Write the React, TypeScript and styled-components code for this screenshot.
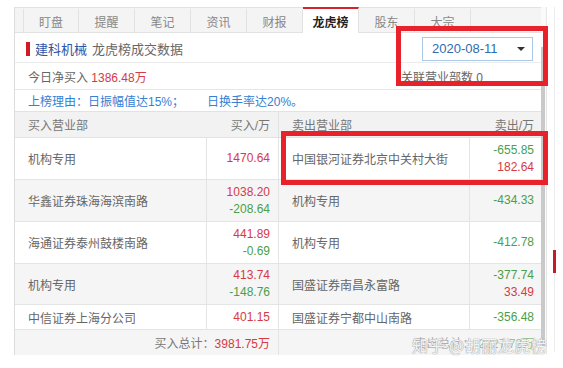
import React from "react";
import styled, { createGlobalStyle } from "styled-components";

const GlobalStyle = createGlobalStyle`
    html, body {
        margin: 0;
        padding: 0;
        background: #fff;
    }
    body {
        font-family: "Liberation Sans", "Noto Sans CJK SC", sans-serif;
        font-size: 12px;
        color: #666;
    }
    * {
        box-sizing: border-box;
    }
`;

type Line = { v: string; up?: boolean };
type Deal = { name: string; lines: Line[] };

const TABS = ["盯盘", "提醒", "笔记", "资讯", "财报", "龙虎榜", "股东", "大宗"];

const BUY: Deal[] = [
    { name: "机构专用", lines: [{ v: "1470.64", up: true }] },
    { name: "华鑫证券珠海海滨南路", lines: [{ v: "1038.20", up: true }, { v: "-208.64" }] },
    { name: "海通证券泰州鼓楼南路", lines: [{ v: "441.89", up: true }, { v: "-0.69" }] },
    { name: "机构专用", lines: [{ v: "413.74", up: true }, { v: "-148.76" }] },
    { name: "中信证券上海分公司", lines: [{ v: "401.15", up: true }] },
];

const SELL: Deal[] = [
    { name: "中国银河证券北京中关村大街", lines: [{ v: "-655.85" }, { v: "182.64", up: true }] },
    { name: "机构专用", lines: [{ v: "-434.33" }] },
    { name: "机构专用", lines: [{ v: "-412.78" }] },
    { name: "国盛证券南昌永富路", lines: [{ v: "-377.74" }, { v: "33.49", up: true }] },
    { name: "国盛证券宁都中山南路", lines: [{ v: "-356.48" }] },
];

// 行高 (参考图测量)
const ROW_HEIGHTS = [42, 42, 42, 41, 25];

export default function App() {
    return (
        <>
            <GlobalStyle />
            <Page>
                <Panel>
                    <TabBar>
                        {TABS.map((t) => (
                            <Tab key={t} $active={t === "龙虎榜"}>{t}</Tab>
                        ))}
                    </TabBar>

                    <TitleRow>
                        <RedMark />
                        <StockName>建科机械</StockName>
                        <span>龙虎榜成交数据</span>
                        <DateSelect>
                            2020-08-11
                            <Caret />
                        </DateSelect>
                    </TitleRow>

                    <InfoRow>
                        <span>
                            今日净买入 <Num $up>1386.48万</Num>
                        </span>
                        <Related>关联营业部数 0</Related>
                    </InfoRow>

                    <ReasonRow>
                        <span>上榜理由：日振幅值达15%；</span>
                        <span>日换手率达20%。</span>
                    </ReasonRow>

                    <Table>
                        <HeadCell>买入营业部</HeadCell>
                        <HeadCell $right>买入/万</HeadCell>
                        <HeadCell $split>卖出营业部</HeadCell>
                        <HeadCell $right>卖出/万</HeadCell>

                        {BUY.map((b, i) => {
                            const s = SELL[i];
                            const shade = i % 2 === 1;
                            const h = ROW_HEIGHTS[i];
                            return (
                                <React.Fragment key={i}>
                                    <NameCell $shade={shade} style={{ height: h }}>{b.name}</NameCell>
                                    <AmountCell $shade={shade}>
                                        {b.lines.map((l, j) => (
                                            <Num key={j} $up={l.up}>{l.v}</Num>
                                        ))}
                                    </AmountCell>
                                    <NameCell $shade={shade} $split>{s.name}</NameCell>
                                    <AmountCell $shade={shade}>
                                        {s.lines.map((l, j) => (
                                            <Num key={j} $up={l.up}>{l.v}</Num>
                                        ))}
                                    </AmountCell>
                                </React.Fragment>
                            );
                        })}

                        <TotalCell>
                            买入总计：<Num $up>3981.75万</Num>
                        </TotalCell>
                        <TotalCell $split>
                            <Faded>卖出总计：<Num>-2227.72万</Num></Faded>
                        </TotalCell>
                    </Table>
                </Panel>

                <ScrollTrack>
                    <ScrollThumb />
                </ScrollTrack>

                <SideRail>
                    <RailMark />
                </SideRail>

                <Callout style={{ left: 396, top: 26, width: 152, height: 60 }} />
                <Callout style={{ left: 281, top: 131, width: 267, height: 54 }} />
                <Watermark>知乎 @胡丽龙虎榜</Watermark>
            </Page>
        </>
    );
}

const Page = styled.div`
    position: relative;
    display: flex;
    align-items: flex-start;
    width: 563px;
    height: 368px;
    padding: 7px 0 0 14px;
    overflow: hidden;
`;

const Panel = styled.div`
    width: 527px;
    border-left: 1px solid #dcdcdc;
`;

const TabBar = styled.div`
    display: flex;
    height: 26px;
    padding-left: 8px;
    background: #f4f4f4;
    border-top: 1px solid #e2e2e2;
    border-bottom: 1px solid #e2e2e2;
`;

const Tab = styled.div<{ $active?: boolean }>`
    width: 56px;
    margin-bottom: -1px;
    display: flex;
    align-items: center;
    justify-content: center;
    border-right: 1px solid #e2e2e2;
    font-size: 12px;
    color: ${(p) => (p.$active ? "#222" : "#888")};
    font-weight: ${(p) => (p.$active ? "bold" : "normal")};
    background: ${(p) => (p.$active ? "#fff" : "transparent")};
    border-top: 2px solid ${(p) => (p.$active ? "#d4232b" : "transparent")};
    margin-top: ${(p) => (p.$active ? "-1px" : "0")};

    &:first-child {
        border-left: 1px solid #e2e2e2;
    }
`;

const TitleRow = styled.div`
    display: flex;
    align-items: center;
    height: 29px;
    padding: 2px 8px 0 11px;
    font-size: 13px;
    color: #666;
`;

const RedMark = styled.span`
    width: 4px;
    height: 14px;
    background: #d11a26;
    margin-right: 5px;
`;

const StockName = styled.span`
    color: #2f55a4;
    margin-right: 5px;
`;

const DateSelect = styled.div`
    margin-left: auto;
    width: 111px;
    height: 24px;
    display: flex;
    align-items: center;
    justify-content: space-between;
    padding: 0 7px 0 9px;
    border: 1px solid #a9c9e8;
    color: #2c6db3;
    font-size: 13px;
    background: #fff;
`;

const Caret = styled.span`
    width: 0;
    height: 0;
    border-left: 4px solid transparent;
    border-right: 4px solid transparent;
    border-top: 4px solid #333;
`;

const InfoRow = styled.div`
    display: flex;
    align-items: center;
    justify-content: space-between;
    height: 27px;
    padding-left: 13px;
    border-top: 1px solid #ececec;
    font-size: 12px;
    color: #666;
`;

const Related = styled.span`
    width: 140px;
`;

const ReasonRow = styled.div`
    display: flex;
    align-items: center;
    gap: 23px;
    height: 22px;
    padding-left: 13px;
    border-top: 1px solid #e6e6e6;
    color: #3580d2;
    font-size: 12px;
`;

const Table = styled.div`
    display: grid;
    grid-template-columns: 192px 71px 192px 72px;
    border-top: 1px solid #e2e2e2;
`;

const HeadCell = styled.div<{ $right?: boolean; $split?: boolean }>`
    height: 26px;
    display: flex;
    align-items: center;
    justify-content: ${(p) => (p.$right ? "flex-end" : "flex-start")};
    padding: 0 8px 0 13px;
    background: #f2f2f2;
    border-bottom: 1px solid #e2e2e2;
    border-left: ${(p) => (p.$split ? "1px solid #e2e2e2" : "none")};
    color: #777;
`;

const NameCell = styled.div<{ $shade?: boolean; $split?: boolean }>`
    display: flex;
    align-items: center;
    padding-left: 13px;
    background: ${(p) => (p.$shade ? "#f5f5f5" : "#fff")};
    border-bottom: 1px solid #e4e4e4;
    border-left: ${(p) => (p.$split ? "1px solid #e4e4e4" : "none")};
    border-right: 1px solid #e4e4e4;
    color: #666;
    white-space: nowrap;
`;

const AmountCell = styled.div<{ $shade?: boolean }>`
    display: flex;
    flex-direction: column;
    align-items: flex-end;
    justify-content: center;
    padding-right: 8px;
    line-height: 17px;
    background: ${(p) => (p.$shade ? "#f5f5f5" : "#fff")};
    border-bottom: 1px solid #e4e4e4;
`;

const Num = styled.span<{ $up?: boolean }>`
    color: ${(p) => (p.$up ? "#d63a45" : "#4a9f48")};
`;

const TotalCell = styled.div<{ $split?: boolean }>`
    grid-column: span 2;
    height: 25px;
    display: flex;
    align-items: center;
    justify-content: flex-end;
    padding-right: 8px;
    background: #f5f5f5;
    border-left: ${(p) => (p.$split ? "1px solid #e4e4e4" : "none")};
    color: #777;
`;

const Faded = styled.span`
    opacity: 0.55;
`;

const ScrollTrack = styled.div`
    width: 6px;
    height: 347px;
    padding-top: 40px;
    border-right: 1px solid #e6e6e6;
    background: #fafafa;
`;

const ScrollThumb = styled.div`
    width: 4px;
    height: 300px;
    background: #c9c9c9;
`;

const SideRail = styled.div`
    margin-left: 7px;
    width: 3px;
    height: 345px;
    padding-top: 243px;
    border-left: 1px solid #ededed;
`;

const RailMark = styled.div`
    width: 3px;
    height: 23px;
    margin-left: -2px;
    background: #c41d25;
`;

const Callout = styled.div`
    position: absolute;
    border: 5px solid #e8222b;
    pointer-events: none;
`;

const Watermark = styled.div`
    position: absolute;
    left: 412px;
    top: 333px;
    font-family: "Noto Sans CJK SC", sans-serif;
    font-size: 16px;
    letter-spacing: 0.5px;
    color: rgba(255, 255, 255, 0.9);
    text-shadow: 0 0 1px #9a9a9a, 0 0 1px #9a9a9a;
    white-space: nowrap;
`;
